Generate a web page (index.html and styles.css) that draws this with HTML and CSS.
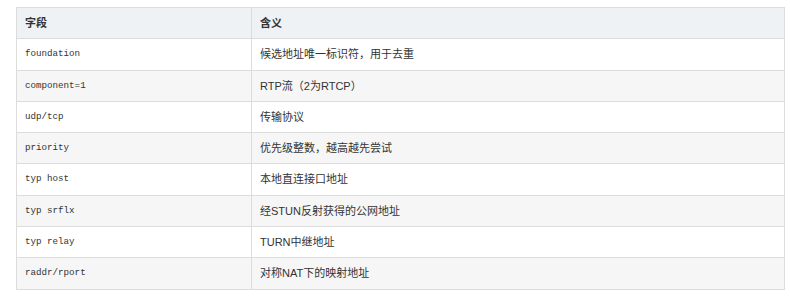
FILE: index.html
```html
<!DOCTYPE html>
<html lang="zh-CN">
<head>
<meta charset="utf-8">
<title>ICE candidate 字段</title>
<link rel="stylesheet" href="styles.css">
</head>
<body>
<div class="wrap">
<table class="fields">
<thead>
<tr><th class="c1">字段</th><th>含义</th></tr>
</thead>
<tbody>
<tr><td class="code">foundation</td><td>候选地址唯一标识符，用于去重</td></tr>
<tr><td class="code">component=1</td><td>RTP流（2为RTCP）</td></tr>
<tr><td class="code">udp/tcp</td><td>传输协议</td></tr>
<tr><td class="code">priority</td><td>优先级整数，越高越先尝试</td></tr>
<tr><td class="code">typ host</td><td>本地直连接口地址</td></tr>
<tr><td class="code">typ srflx</td><td>经STUN反射获得的公网地址</td></tr>
<tr><td class="code">typ relay</td><td>TURN中继地址</td></tr>
<tr><td class="code">raddr/rport</td><td>对称NAT下的映射地址</td></tr>
</tbody>
</table>
</div>
</body>
</html>
```
FILE: styles.css
```css
html, body {
  margin: 0;
  padding: 0;
  background: #ffffff;
}
.wrap {
  padding: 7px 0 0 16px;
}
.fields {
  border-collapse: collapse;
  width: 769px;
  table-layout: fixed;
  font-family: "Liberation Sans", "Noto Sans CJK SC", sans-serif;
  font-size: 11px;
  color: #333333;
}
.fields th,
.fields td {
  border: 1px solid #dcdcdc;
  padding: 8px 8px;
  line-height: 14.3px;
  text-align: left;
  vertical-align: middle;
}
.fields th {
  background: #eef2f5;
  font-weight: bold;
}
.fields .c1 {
  width: 218px;
}
.fields tbody tr:nth-child(odd) td {
  background: #ffffff;
}
.fields tbody tr:nth-child(even) td {
  background: #f6f6f6;
}
.fields td.code {
  font-family: "Liberation Mono", monospace;
  font-size: 9.2px;
  color: #333333;
}
```
